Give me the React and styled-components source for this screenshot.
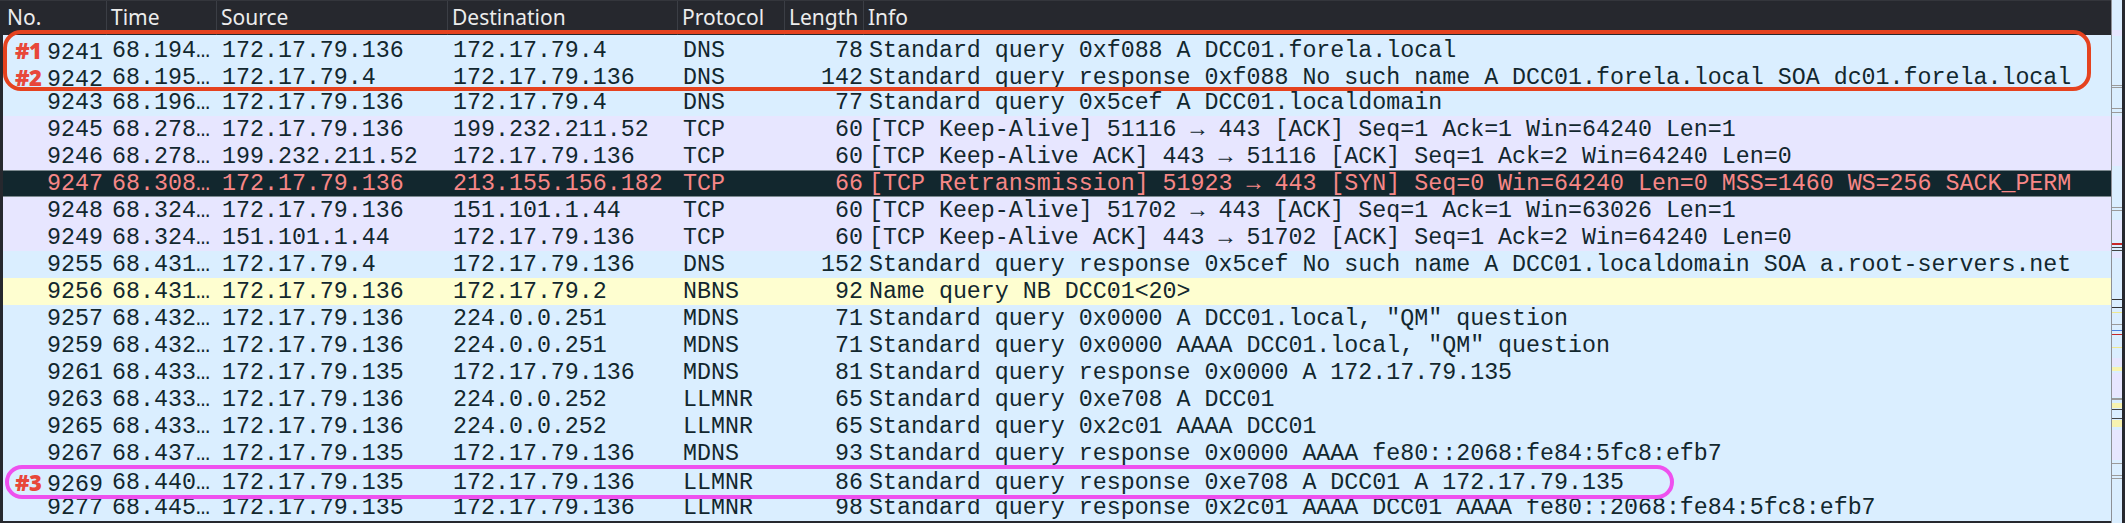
import React from "react";
import styled, { createGlobalStyle, css } from "styled-components";

const GlobalStyle = createGlobalStyle`
  html, body {
    margin: 0;
    padding: 0;
    background: #26282e;
  }
  #root {
    height: 523px;
  }
`;

const COLS = "104px 110px 231px 230px 107px 79px 1fr";

const Window = styled.div`
  display: flex;
  width: 2125px;
  height: 523px;
  overflow: hidden;
  background: #26282e;
  padding-right: 3px;
  box-sizing: border-box;
`;

const PacketList = styled.div`
  flex: 1;
  display: flex;
  flex-direction: column;
  min-width: 0;
`;

const HeaderRow = styled.div`
  display: grid;
  grid-template-columns: ${COLS};
  height: 35px;
  padding-left: 3px;
  background: #26282e;
  border-top: 1px solid #34363c;
  box-sizing: border-box;
`;

const HeaderCell = styled.div`
  display: flex;
  align-items: center;
  padding: 0 5px 2px 4px;
  border-right: 1px solid #3b3e45;
  color: #ececec;
  font-family: "Noto Sans", "Open Sans", sans-serif;
  font-size: 21px;
  white-space: nowrap;
  overflow: hidden;
  &:last-child {
    border-right: none;
  }
`;

const Body = styled.div`
  flex: 1;
  padding-left: 3px;
  background: #26282e;
`;

const themes = {
  udp: { bg: "#daeeff", fg: "#12272e" },
  tcp: { bg: "#e7e6ff", fg: "#12272e" },
  bad: { bg: "#12272e", fg: "#f78787" },
  nbns: { bg: "#fefed0", fg: "#12272e" },
};

const Row = styled.div`
  display: grid;
  grid-template-columns: ${COLS};
  height: 27px;
  align-items: center;
  background: ${(p) => themes[p.$kind].bg};
  color: ${(p) => themes[p.$kind].fg};
  font-family: "Liberation Mono", "DejaVu Sans Mono", monospace;
  font-size: 23.3px;
  ${(p) =>
    p.$kind === "bad" &&
    css`
      box-shadow: inset 0 1px 0 #7d8a90, inset 0 -1px 0 #7d8a90;
    `}
`;

const Cell = styled.div`
  padding: 0 ${(p) => (p.$right ? "1px" : "5px")} 0 5px;
  text-align: ${(p) => (p.$right ? "right" : "left")};
  white-space: pre;
  overflow: hidden;
`;

const NoCell = styled.div`
  display: flex;
  align-items: baseline;
  justify-content: space-between;
  padding: 0 4px 0 12px;
  white-space: pre;
`;

const Tag = styled.span`
  font-family: "Open Sans", "Noto Sans", sans-serif;
  font-weight: 800;
  font-size: 22px;
  letter-spacing: -0.5px;
  color: #e8473a;
`;

const Marked = styled.div`
  position: relative;
  &::after {
    content: "";
    position: absolute;
    top: ${(p) => p.$top}px;
    bottom: ${(p) => p.$bottom}px;
    left: ${(p) => p.$left}px;
    right: ${(p) => p.$right}px;
    border: 4.5px solid ${(p) => p.$color};
    border-radius: 18px;
    pointer-events: none;
  }
`;

const Minimap = styled.div`
  width: 11px;
  border-left: 1px solid #8d9096;
  box-sizing: border-box;
  background: #daeeff;
`;

const headers = ["No.", "Time", "Source", "Destination", "Protocol", "Length", "Info"];

const packets = [
  ["9241", "68.194…", "172.17.79.136", "172.17.79.4", "DNS", "78", "Standard query 0xf088 A DCC01.forela.local", "udp", "#1"],
  ["9242", "68.195…", "172.17.79.4", "172.17.79.136", "DNS", "142", "Standard query response 0xf088 No such name A DCC01.forela.local SOA dc01.forela.local", "udp", "#2"],
  ["9243", "68.196…", "172.17.79.136", "172.17.79.4", "DNS", "77", "Standard query 0x5cef A DCC01.localdomain", "udp"],
  ["9245", "68.278…", "172.17.79.136", "199.232.211.52", "TCP", "60", "[TCP Keep-Alive] 51116 → 443 [ACK] Seq=1 Ack=1 Win=64240 Len=1", "tcp"],
  ["9246", "68.278…", "199.232.211.52", "172.17.79.136", "TCP", "60", "[TCP Keep-Alive ACK] 443 → 51116 [ACK] Seq=1 Ack=2 Win=64240 Len=0", "tcp"],
  ["9247", "68.308…", "172.17.79.136", "213.155.156.182", "TCP", "66", "[TCP Retransmission] 51923 → 443 [SYN] Seq=0 Win=64240 Len=0 MSS=1460 WS=256 SACK_PERM", "bad"],
  ["9248", "68.324…", "172.17.79.136", "151.101.1.44", "TCP", "60", "[TCP Keep-Alive] 51702 → 443 [ACK] Seq=1 Ack=1 Win=63026 Len=1", "tcp"],
  ["9249", "68.324…", "151.101.1.44", "172.17.79.136", "TCP", "60", "[TCP Keep-Alive ACK] 443 → 51702 [ACK] Seq=1 Ack=2 Win=64240 Len=0", "tcp"],
  ["9255", "68.431…", "172.17.79.4", "172.17.79.136", "DNS", "152", "Standard query response 0x5cef No such name A DCC01.localdomain SOA a.root-servers.net", "udp"],
  ["9256", "68.431…", "172.17.79.136", "172.17.79.2", "NBNS", "92", "Name query NB DCC01<20>", "nbns"],
  ["9257", "68.432…", "172.17.79.136", "224.0.0.251", "MDNS", "71", "Standard query 0x0000 A DCC01.local, \"QM\" question", "udp"],
  ["9259", "68.432…", "172.17.79.136", "224.0.0.251", "MDNS", "71", "Standard query 0x0000 AAAA DCC01.local, \"QM\" question", "udp"],
  ["9261", "68.433…", "172.17.79.135", "172.17.79.136", "MDNS", "81", "Standard query response 0x0000 A 172.17.79.135", "udp"],
  ["9263", "68.433…", "172.17.79.136", "224.0.0.252", "LLMNR", "65", "Standard query 0xe708 A DCC01", "udp"],
  ["9265", "68.433…", "172.17.79.136", "224.0.0.252", "LLMNR", "65", "Standard query 0x2c01 AAAA DCC01", "udp"],
  ["9267", "68.437…", "172.17.79.135", "172.17.79.136", "MDNS", "93", "Standard query response 0x0000 AAAA fe80::2068:fe84:5fc8:efb7", "udp"],
  ["9269", "68.440…", "172.17.79.135", "172.17.79.136", "LLMNR", "86", "Standard query response 0xe708 A DCC01 A 172.17.79.135", "udp", "#3"],
  ["9277", "68.445…", "172.17.79.135", "172.17.79.136", "LLMNR", "98", "Standard query response 0x2c01 AAAA DCC01 AAAA fe80::2068:fe84:5fc8:efb7", "udp"],
];

// minimap ticks: [y, height, colour]
const ticks = [
  [30, 6, "#e7e6ff"], [85, 1, "#9a9a9a"], [87, 1, "#9a9a9a"], [108, 1, "#9a9a9a"], [112, 1, "#9a9a9a"],
  [116, 50, "#e7e6ff"], [207, 1, "#9a9a9a"], [210, 1, "#9a9a9a"], [220, 20, "#e7e6ff"],
  [243, 2, "#c62828"], [247, 1, "#444"], [250, 1, "#444"], [252, 6, "#e7e6ff"],
  [299, 1, "#333"], [307, 1, "#333"], [312, 1, "#efe98f"], [324, 1, "#9a9a9a"],
  [330, 1, "#4a7fe0"], [334, 1, "#c62828"], [347, 1, "#efe98f"], [358, 8, "#e7e6ff"],
  [367, 4, "#f7f3b0"], [373, 24, "#e7e6ff"], [398, 2, "#9a9a9a"], [403, 5, "#f7f3b0"],
  [409, 1, "#444"], [418, 1, "#444"], [420, 7, "#f7f3b0"], [430, 30, "#e7e6ff"],
  [463, 1, "#9a9a9a"], [475, 1, "#9a9a9a"], [478, 1, "#9a9a9a"],
];

function PacketRow({ p }) {
  const [no, time, src, dst, proto, len, info, kind, tag] = p;
  return (
    <Row $kind={kind}>
      <NoCell>
        <Tag>{tag || ""}</Tag>
        <span>{no}</span>
      </NoCell>
      <Cell>{time}</Cell>
      <Cell>{src}</Cell>
      <Cell>{dst}</Cell>
      <Cell>{proto}</Cell>
      <Cell $right>{len}</Cell>
      <Cell>{info}</Cell>
    </Row>
  );
}

export default function App() {
  return (
    <>
      <GlobalStyle />
      <Window>
        <PacketList>
          <HeaderRow>
            {headers.map((h) => (
              <HeaderCell key={h}>{h}</HeaderCell>
            ))}
          </HeaderRow>
          <Body>
            <Marked $color="#e5421f" $top={-5} $bottom={-2} $left={0} $right={20}>
              {packets.slice(0, 2).map((p) => (
                <PacketRow key={p[0]} p={p} />
              ))}
            </Marked>
            {packets.slice(2, 16).map((p) => (
              <PacketRow key={p[0]} p={p} />
            ))}
            <Marked $color="#ee50ee" $top={-2} $bottom={-5} $left={2} $right={437}>
              <PacketRow p={packets[16]} />
            </Marked>
            <PacketRow p={packets[17]} />
          </Body>
        </PacketList>
        <Minimap>
          <svg width="10" height="523" viewBox="0 0 10 523">
            {ticks.map(([y, h, c], i) => (
              <rect key={i} x="0" y={y} width="10" height={h} fill={c} />
            ))}
          </svg>
        </Minimap>
      </Window>
    </>
  );
}
